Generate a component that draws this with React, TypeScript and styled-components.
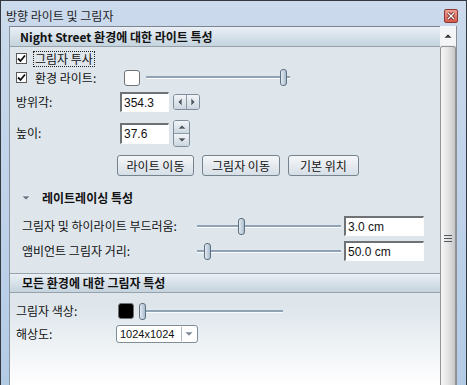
import React from 'react'
import styled, { createGlobalStyle } from 'styled-components'

const GlobalStyle = createGlobalStyle`
  html, body {
    margin: 0;
    padding: 0;
  }
  body {
    width: 467px;
    height: 385px;
    overflow: hidden;
    font-family: 'Noto Sans CJK KR', 'Noto Sans', sans-serif;
    color: #111;
  }
`

const Window = styled.div`
  width: 467px;
  height: 385px;
  box-sizing: border-box;
  border: 1px solid #34393f;
  border-bottom: 0;
  background: linear-gradient(to bottom, #cbdaec, #b4cbe6);
  display: flex;
  flex-direction: column;
`

const TitleBar = styled.div`
  height: 25px;
  flex: none;
  display: flex;
  align-items: center;
  justify-content: space-between;
  box-sizing: border-box;
  padding: 6px 8px 2px 5px;
  font-size: 12px;
  line-height: 14px;
  color: #1d1d1d;
`

const CloseButton = styled.div`
  width: 12px;
  height: 12px;
  border: 1px solid #8a3a32;
  border-radius: 2px;
  background: linear-gradient(to bottom, #f0a096, #d5584a);
  display: flex;
  align-items: center;
  justify-content: center;
`

const Body = styled.div`
  flex: 1;
  display: flex;
  min-height: 0;
  padding-left: 8px;
`

const Panel = styled.div`
  flex: 1;
  border-left: 1px solid #8a949c;
  border-top: 1px solid #7d868e;
  background: linear-gradient(to bottom, #dee6ec 0%, #dee6ec 78%, #ffffff 100%);
  display: flex;
  flex-direction: column;
  overflow: hidden;
`

const SectionHeader = styled.div<{ $pad: number; $top?: boolean }>`
  height: 20px;
  flex: none;
  box-sizing: border-box;
  display: flex;
  align-items: center;
  padding-left: ${(p) => p.$pad}px;
  background: linear-gradient(to bottom, #eaeff6, #c4d3dd);
  border-bottom: 1px solid #97a2aa;
  border-top: ${(p) => (p.$top ? '1px solid #97a2aa' : '0')};
  font-size: 12px;
  font-weight: 700;
  line-height: 14px;
  color: #111;
`

const Section = styled.div<{ $pad: number }>`
  display: flex;
  flex-direction: column;
  padding-left: ${(p) => p.$pad}px;
`

const Row = styled.div<{ $h: number; $mt?: number }>`
  height: ${(p) => p.$h}px;
  margin-top: ${(p) => p.$mt ?? 0}px;
  display: flex;
  align-items: center;
  font-size: 12px;
  line-height: 14px;
`

const Label = styled.div<{ $w: number }>`
  width: ${(p) => p.$w}px;
  flex: none;
  white-space: nowrap;
`

const CheckBox = styled.div`
  width: 9px;
  height: 9px;
  border: 1px solid #5a5a5a;
  background: #fff;
  flex: none;
  display: flex;
  align-items: center;
  justify-content: center;
`

const CheckLabel = styled.div<{ $focus?: boolean }>`
  margin-left: 6px;
  padding: 0 1px;
  border: 1px dotted ${(p) => (p.$focus ? '#222' : 'transparent')};
  white-space: nowrap;
`

const Swatch = styled.div<{ $color: string; $ml?: number }>`
  width: 14px;
  height: 14px;
  margin-left: ${(p) => p.$ml ?? 0}px;
  border: 1px solid #6e7378;
  border-radius: 3px;
  background: ${(p) => p.$color};
  flex: none;
`

const SliderTrack = styled.div<{ $w: number; $ml?: number }>`
  position: relative;
  width: ${(p) => p.$w}px;
  height: 2px;
  margin-left: ${(p) => p.$ml ?? 0}px;
  background: #8fa3b5;
  border-bottom: 1px solid #fafcfd;
  flex: none;
`

const SliderThumb = styled.div`
  position: absolute;
  top: -7px;
  width: 5px;
  height: 15px;
  box-sizing: content-box;
  border: 1px solid #5d6f80;
  border-radius: 3px;
  background: linear-gradient(to right, #e4ebf2, #a9bccd);
`

const TextInput = styled.div<{ $w: number; $h: number; $ml?: number }>`
  width: ${(p) => p.$w}px;
  height: ${(p) => p.$h}px;
  margin-left: ${(p) => p.$ml ?? 0}px;
  box-sizing: border-box;
  border: 1px solid #fdfdfd;
  border-top: 2px solid #6f7275;
  border-left: 2px solid #6f7275;
  background: #fff;
  display: flex;
  align-items: center;
  padding-left: 2px;
  font-family: 'Liberation Sans', Arial, sans-serif;
  font-size: 12px;
  color: #111;
  flex: none;
`

const SpinBox = styled.div<{ $dir: 'row' | 'column'; $ml?: number }>`
  display: flex;
  flex-direction: ${(p) => p.$dir};
  margin-left: ${(p) => p.$ml ?? 0}px;
  border: 1px solid #7d8d9b;
  border-radius: 3px;
  overflow: hidden;
  flex: none;
`

const SpinHalf = styled.div<{ $w: number; $h: number; $sep?: 'left' | 'top' }>`
  width: ${(p) => p.$w}px;
  height: ${(p) => p.$h}px;
  display: flex;
  align-items: center;
  justify-content: center;
  background: linear-gradient(to bottom, #f1f4f7, #ccd6df);
  border-left: ${(p) => (p.$sep === 'left' ? '1px solid #8c9aa6' : '0')};
  border-top: ${(p) => (p.$sep === 'top' ? '1px solid #8c9aa6' : '0')};
`

const ButtonRow = styled.div`
  display: flex;
  gap: 8px;
  margin-top: 9px;
  margin-left: 101px;
`

const PushButton = styled.div<{ $w: number }>`
  width: ${(p) => p.$w}px;
  height: 21px;
  box-sizing: border-box;
  border: 1px solid #75838f;
  border-radius: 3px;
  background: linear-gradient(to bottom, #f5f7f9, #d6dee6);
  display: flex;
  align-items: center;
  justify-content: center;
  font-size: 12px;
  line-height: 14px;
  white-space: nowrap;
`

const CollapseTitle = styled.div`
  display: flex;
  align-items: center;
  gap: 12px;
  font-weight: 700;
`

const Select = styled.div`
  width: 82px;
  height: 18px;
  box-sizing: border-box;
  border: 1px solid #7f8d99;
  border-radius: 3px;
  background: #fff;
  display: flex;
  align-items: center;
  flex: none;
`

const SelectText = styled.div`
  flex: 1;
  padding-left: 3px;
  font-family: 'Liberation Sans', Arial, sans-serif;
  font-size: 11px;
`

const SelectArrow = styled.div`
  width: 14px;
  height: 14px;
  margin-right: 1px;
  border-left: 1px solid #a9b5bf;
  display: flex;
  align-items: center;
  justify-content: center;
`

const Scrollbar = styled.div`
  width: 16px;
  flex: none;
  display: flex;
  flex-direction: column;
  background: #e9ecef;
  border-right: 1px solid #8c9095;
`

const ScrollArrow = styled.div`
  height: 19px;
  flex: none;
  display: flex;
  align-items: center;
  justify-content: center;
  background: #f4f5f6;
`

const ScrollThumb = styled.div`
  flex: 1;
  margin-top: 1px;
  border: 1px solid #8f9499;
  border-bottom: 0;
  border-radius: 3px 3px 0 0;
  background: linear-gradient(to right, #f6f6f6, #e4e4e4 50%, #c6c6c6);
  display: flex;
  justify-content: center;
  padding-top: 188px;
`

const Grip = styled.div`
  width: 8px;
  height: 7px;
  display: flex;
  flex-direction: column;
  justify-content: space-between;
  span {
    display: block;
    height: 1px;
    background: #55595d;
  }
`

const RightFrame = styled.div`
  width: 9px;
  flex: none;
`

const Tri = ({ dir, color = '#4f5c68' }: { dir: 'up' | 'down' | 'left' | 'right'; color?: string }) => {
  const pts = {
    up: '0,5 4,1 8,5',
    down: '0,1 8,1 4,5',
    left: '5,0 5,8 1,4',
    right: '1,0 1,8 5,4',
  }[dir]
  const vertical = dir === 'up' || dir === 'down'
  return (
    <svg width={vertical ? 8 : 6} height={vertical ? 6 : 8} viewBox={vertical ? '0 0 8 6' : '0 0 6 8'}>
      <polygon points={pts} fill={color} stroke="#fff" strokeWidth="0.5" />
    </svg>
  )
}

const Check = () => (
  <svg width="9" height="9" viewBox="0 0 9 9">
    <path d="M1 4.5 L3.5 7 L8 1.5" stroke="#111" strokeWidth="1.8" fill="none" />
  </svg>
)

export default function App() {
  return (
    <>
      <GlobalStyle />
      <Window>
        <TitleBar>
          <span>방향 라이트 및 그림자</span>
          <CloseButton>
            <svg width="8" height="8" viewBox="0 0 8 8">
              <path d="M1 1 L7 7 M7 1 L1 7" stroke="#5a1a14" strokeWidth="3" />
              <path d="M1 1 L7 7 M7 1 L1 7" stroke="#fff" strokeWidth="1.4" />
            </svg>
          </CloseButton>
        </TitleBar>
        <Body>
          <Panel>
            <SectionHeader $pad={10}>Night Street 환경에 대한 라이트 특성</SectionHeader>
            <Section $pad={6}>
              <Row $h={19} $mt={2}>
                <CheckBox><Check /></CheckBox>
                <CheckLabel $focus>그림자 투사</CheckLabel>
              </Row>
              <Row $h={19}>
                <CheckBox><Check /></CheckBox>
                <CheckLabel>환경 라이트:</CheckLabel>
                <Swatch $color="#ffffff" $ml={26} />
                <SliderTrack $w={144} $ml={6}>
                  <SliderThumb style={{ left: 134 }} />
                </SliderTrack>
              </Row>
              <Row $h={20} $mt={5}>
                <Label $w={104}>방위각:</Label>
                <TextInput $w={49} $h={20}>354.3</TextInput>
                <SpinBox $dir="row" $ml={4}>
                  <SpinHalf $w={12} $h={14}><Tri dir="left" /></SpinHalf>
                  <SpinHalf $w={12} $h={14} $sep="left"><Tri dir="right" /></SpinHalf>
                </SpinBox>
              </Row>
              <Row $h={26} $mt={8}>
                <Label $w={104}>높이:</Label>
                <TextInput $w={49} $h={21}>37.6</TextInput>
                <SpinBox $dir="column" $ml={4}>
                  <SpinHalf $w={15} $h={12}><Tri dir="up" /></SpinHalf>
                  <SpinHalf $w={15} $h={12} $sep="top"><Tri dir="down" /></SpinHalf>
                </SpinBox>
              </Row>
              <ButtonRow>
                <PushButton $w={77}>라이트 이동</PushButton>
                <PushButton $w={78}>그림자 이동</PushButton>
                <PushButton $w={71}>기본 위치</PushButton>
              </ButtonRow>
            </Section>
            <Section $pad={12}>
              <Row $h={18} $mt={13}>
                <CollapseTitle>
                  <Tri dir="down" color="#6a7785" />
                  <span>레이트레이싱 특성</span>
                </CollapseTitle>
              </Row>
              <Row $h={20} $mt={9}>
                <Label $w={175}>그림자 및 하이라이트 부드러움:</Label>
                <SliderTrack $w={144}>
                  <SliderThumb style={{ left: 41 }} />
                </SliderTrack>
                <TextInput $w={80} $h={20} $ml={3}>3.0 cm</TextInput>
              </Row>
              <Row $h={20} $mt={5}>
                <Label $w={175}>앰비언트 그림자 거리:</Label>
                <SliderTrack $w={144}>
                  <SliderThumb style={{ left: 7 }} />
                </SliderTrack>
                <TextInput $w={80} $h={20} $ml={3}>50.0 cm</TextInput>
              </Row>
            </Section>
            <SectionHeader $pad={12} $top style={{ marginTop: 12 }}>모든 환경에 대한 그림자 특성</SectionHeader>
            <Section $pad={6}>
              <Row $h={18} $mt={9}>
                <Label $w={102}>그림자 색상:</Label>
                <Swatch $color="#000000" />
                <SliderTrack $w={141} $ml={8}>
                  <SliderThumb style={{ left: -3 }} />
                </SliderTrack>
              </Row>
              <Row $h={18} $mt={5}>
                <Label $w={100}>해상도:</Label>
                <Select>
                  <SelectText>1024x1024</SelectText>
                  <SelectArrow><Tri dir="down" color="#7d8a96" /></SelectArrow>
                </Select>
              </Row>
            </Section>
          </Panel>
          <Scrollbar>
            <ScrollArrow><Tri dir="up" color="#3a3a3a" /></ScrollArrow>
            <ScrollThumb>
              <Grip><span /><span /><span /></Grip>
            </ScrollThumb>
          </Scrollbar>
          <RightFrame />
        </Body>
      </Window>
    </>
  )
}
